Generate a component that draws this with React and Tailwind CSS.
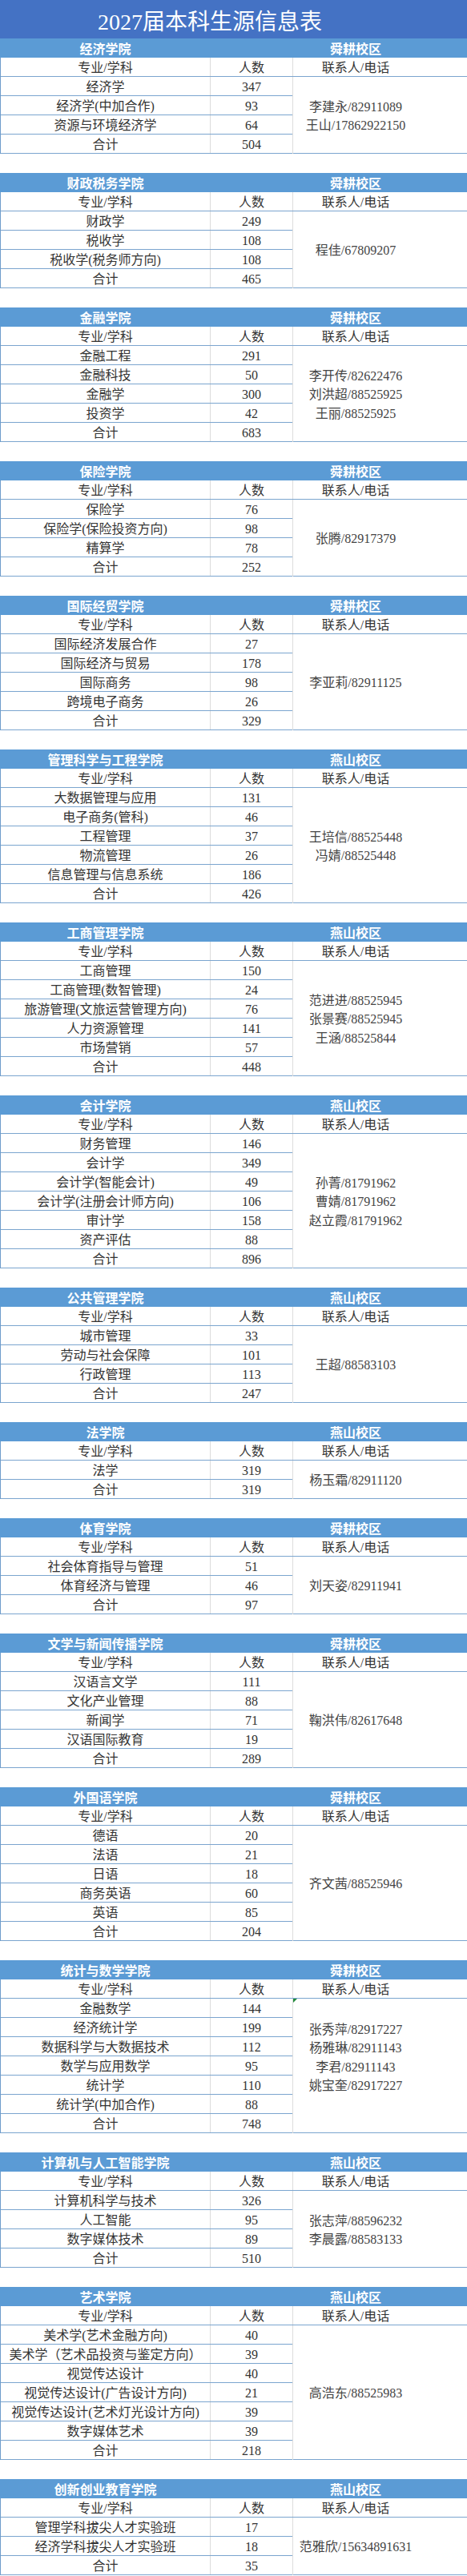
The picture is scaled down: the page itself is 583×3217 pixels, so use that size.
const sections = [
  {
    name: '经济学院',
    campus: '舜耕校区',
    rows: [['经济学', 347], ['经济学(中加合作)', 93], ['资源与环境经济学', 64]],
    total: 504,
    contacts: ['李建永/82911089', '王山/17862922150'],
  },
  {
    name: '财政税务学院',
    campus: '舜耕校区',
    rows: [['财政学', 249], ['税收学', 108], ['税收学(税务师方向)', 108]],
    total: 465,
    contacts: ['程佳/67809207'],
  },
  {
    name: '金融学院',
    campus: '舜耕校区',
    rows: [['金融工程', 291], ['金融科技', 50], ['金融学', 300], ['投资学', 42]],
    total: 683,
    contacts: ['李开传/82622476', '刘洪超/88525925', '王丽/88525925'],
  },
  {
    name: '保险学院',
    campus: '舜耕校区',
    rows: [['保险学', 76], ['保险学(保险投资方向)', 98], ['精算学', 78]],
    total: 252,
    contacts: ['张腾/82917379'],
  },
  {
    name: '国际经贸学院',
    campus: '舜耕校区',
    rows: [['国际经济发展合作', 27], ['国际经济与贸易', 178], ['国际商务', 98], ['跨境电子商务', 26]],
    total: 329,
    contacts: ['李亚莉/82911125'],
  },
  {
    name: '管理科学与工程学院',
    campus: '燕山校区',
    rows: [
      ['大数据管理与应用', 131],
      ['电子商务(管科)', 46],
      ['工程管理', 37],
      ['物流管理', 26],
      ['信息管理与信息系统', 186],
    ],
    total: 426,
    contacts: ['王培信/88525448', '冯婧/88525448'],
  },
  {
    name: '工商管理学院',
    campus: '燕山校区',
    rows: [
      ['工商管理', 150],
      ['工商管理(数智管理)', 24],
      ['旅游管理(文旅运营管理方向)', 76],
      ['人力资源管理', 141],
      ['市场营销', 57],
    ],
    total: 448,
    contacts: ['范进进/88525945', '张景赛/88525945', '王涵/88525844'],
  },
  {
    name: '会计学院',
    campus: '燕山校区',
    rows: [
      ['财务管理', 146],
      ['会计学', 349],
      ['会计学(智能会计)', 49],
      ['会计学(注册会计师方向)', 106],
      ['审计学', 158],
      ['资产评估', 88],
    ],
    total: 896,
    contacts: ['孙菁/81791962', '曹婧/81791962', '赵立霞/81791962'],
  },
  {
    name: '公共管理学院',
    campus: '燕山校区',
    rows: [['城市管理', 33], ['劳动与社会保障', 101], ['行政管理', 113]],
    total: 247,
    contacts: ['王超/88583103'],
  },
  {
    name: '法学院',
    campus: '燕山校区',
    rows: [['法学', 319]],
    total: 319,
    contacts: ['杨玉霜/82911120'],
  },
  {
    name: '体育学院',
    campus: '舜耕校区',
    rows: [['社会体育指导与管理', 51], ['体育经济与管理', 46]],
    total: 97,
    contacts: ['刘天姿/82911941'],
  },
  {
    name: '文学与新闻传播学院',
    campus: '舜耕校区',
    rows: [['汉语言文学', 111], ['文化产业管理', 88], ['新闻学', 71], ['汉语国际教育', 19]],
    total: 289,
    contacts: ['鞠洪伟/82617648'],
  },
  {
    name: '外国语学院',
    campus: '舜耕校区',
    rows: [['德语', 20], ['法语', 21], ['日语', 18], ['商务英语', 60], ['英语', 85]],
    total: 204,
    contacts: ['齐文茜/88525946'],
  },
  {
    name: '统计与数学学院',
    campus: '舜耕校区',
    rows: [
      ['金融数学', 144],
      ['经济统计学', 199],
      ['数据科学与大数据技术', 112],
      ['数学与应用数学', 95],
      ['统计学', 110],
      ['统计学(中加合作)', 88],
    ],
    total: 748,
    contacts: ['张秀萍/82917227', '杨雅琳/82911143', '李君/82911143', '姚宝奎/82917227'],
    lift: true,
    mark: true,
  },
  {
    name: '计算机与人工智能学院',
    campus: '燕山校区',
    rows: [['计算机科学与技术', 326], ['人工智能', 95], ['数字媒体技术', 89]],
    total: 510,
    contacts: ['张志萍/88596232', '李晨露/88583133'],
  },
  {
    name: '艺术学院',
    campus: '燕山校区',
    rows: [
      ['美术学(艺术金融方向)', 40],
      ['美术学（艺术品投资与鉴定方向）', 39],
      ['视觉传达设计', 40],
      ['视觉传达设计(广告设计方向)', 21],
      ['视觉传达设计(艺术灯光设计方向)', 39],
      ['数字媒体艺术', 39],
    ],
    total: 218,
    contacts: ['高浩东/88525983'],
  },
  {
    name: '创新创业教育学院',
    campus: '燕山校区',
    rows: [['管理学科拔尖人才实验班', 17], ['经济学科拔尖人才实验班', 18]],
    total: 35,
    contacts: ['范雅欣/15634891631'],
  },
];

const Section = ({ s }) => {
  const rows = [...s.rows, ['合计', s.total]];
  return (
    <div>
      {/* college + campus bar */}
      <div className="flex h-[24px] items-center bg-[#5b9bd5] pt-[3px] text-[16px] font-bold leading-[20px] text-white">
        <div className="w-[263px] text-center">{s.name}</div>
        <div className="w-[103px]" />
        <div className="w-[156px] text-center">{s.campus}</div>
      </div>

      <div className="border-l border-[#6f9dcb] text-[16px] leading-[20px] text-[#333]">
        {/* column titles */}
        <div className="flex h-[24px] border-b border-[#7ba5cf]">
          <div className="flex w-[262px] items-center justify-center border-r border-[#dcdcdc] pt-[2px]">
            专业/学科
          </div>
          <div className="flex w-[103px] items-center justify-center border-r border-[#dcdcdc] pt-[2px]">
            人数
          </div>
          <div className="flex w-[156px] items-center justify-center pt-[2px]">联系人/电话</div>
        </div>

        <div className="flex">
          <div className="w-[365px] border-r border-[#dcdcdc]">
            {rows.map(([major, count]) => (
              <div key={major} className="flex h-[24px] border-b border-[#7ba5cf]">
                <div className="flex w-[262px] items-center justify-center whitespace-nowrap border-r border-[#dcdcdc] pt-[2px]">
                  {major}
                </div>
                <div className="flex flex-1 items-center justify-center pt-[2px]">{count}</div>
              </div>
            ))}
          </div>
          <div
            className={`relative flex flex-1 flex-col justify-center border-b border-[#7ba5cf] leading-[23.5px] text-[#444] ${
              s.lift ? 'pb-[20px]' : 'pt-[3px]'
            }`}
          >
            {s.mark && (
              <span className="absolute left-0 top-0 h-0 w-0 border-r-[5px] border-t-[5px] border-r-transparent border-t-[#218a3a]" />
            )}
            {s.contacts.map(c => (
              <div key={c} className="w-[156px] whitespace-nowrap text-center">
                {c}
              </div>
            ))}
          </div>
        </div>
      </div>
    </div>
  );
};

export default function App() {
  return (
    <div className="w-[583px] bg-white font-['Liberation_Serif','Noto_Sans_CJK_SC',serif]">
      <div className="flex h-[48px] items-center bg-[#4472c4] pt-[8px]">
        <h1 className="w-[524px] text-center text-[28px] leading-[32px] text-white">2027届本科生源信息表</h1>
      </div>
      {sections.map((s, i) => (
        <div key={s.name}>
          {i > 0 && <div className="h-[24px]" />}
          <Section s={s} />
        </div>
      ))}
    </div>
  );
}
